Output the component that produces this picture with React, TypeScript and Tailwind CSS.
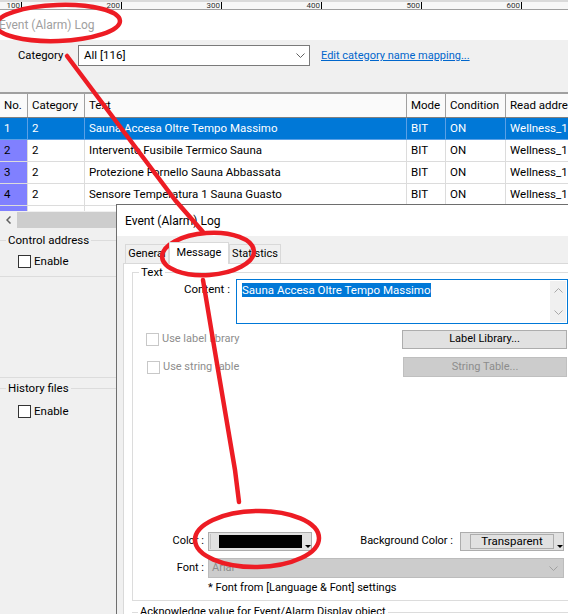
import React from "react"

const cols = "grid grid-cols-[28px_57px_322px_39px_60px_90px]"

const rows = [
    { no: "1", cat: "2", text: "Sauna Accesa Oltre Tempo Massimo", mode: "BIT", cond: "ON", addr: "Wellness_1" },
    { no: "2", cat: "2", text: "Intervento Fusibile Termico Sauna", mode: "BIT", cond: "ON", addr: "Wellness_1" },
    { no: "3", cat: "2", text: "Protezione Fornello Sauna Abbassata", mode: "BIT", cond: "ON", addr: "Wellness_1" },
    { no: "4", cat: "2", text: "Sensore Temperatura 1 Sauna Guasto", mode: "BIT", cond: "ON", addr: "Wellness_1" },
    // only the top few px of row 5 show above the scrollbar
    { no: "", cat: "", text: "", mode: "", cond: "", addr: "" },
]

function Chevron({ color = "#606060" }: { color?: string }) {
    return (
        <svg width="9" height="5" viewBox="0 0 9 5" className="shrink-0">
            <path d="M0.5 0.5 L4.5 4.5 L8.5 0.5" fill="none" stroke={color} strokeWidth="1" />
        </svg>
    )
}

function Tri() {
    return (
        <svg width="6" height="3" viewBox="0 0 6 3" className="shrink-0">
            <path d="M0 0 H6 L3 3 Z" fill="#000" />
        </svg>
    )
}

function Check({ disabled }: { disabled?: boolean }) {
    return (
        <span className={`inline-block w-[13px] h-[13px] shrink-0 bg-white border ${disabled ? "border-[#c8c8c8]" : "border-[#333333]"}`} />
    )
}

function Ruler() {
    return (
        <div className="h-[10px] bg-[#f7f7f7] border-t-[2px] border-t-[#dadada] border-b border-b-[#a0a0a0] flex overflow-hidden">
            <div className="flex -ml-[78px]">
                {["100", "200", "300", "400", "500", "600"].map((n) => (
                    <div key={n} className="w-[100px] h-[7px] shrink-0 flex justify-end items-end border-r border-black">
                        <span className="text-[8px] leading-[7px] pr-[1px] text-[#333]">{n}</span>
                    </div>
                ))}
            </div>
        </div>
    )
}

function Table() {
    return (
        <div className="h-[119px] overflow-hidden border-t-[2px] border-[#a0a0a0] bg-white text-[11.5px]">
            <div className={`${cols} h-[24px] bg-[#fafafa] border-b border-[#808080]`}>
                {["No.", "Category", "Text", "Mode", "Condition", "Read address"].map((h) => (
                    <div key={h} className="border-r border-[#a0a0a0] px-[4px] flex items-center whitespace-nowrap overflow-hidden">{h}</div>
                ))}
            </div>
            {rows.map((r, i) => {
                const sel = i === 0
                const cell = `border-r border-b px-[4px] flex items-center whitespace-nowrap overflow-hidden ${sel ? "bg-[#0078d7] text-white border-[#5aa0e6]" : "border-[#dcdcdc]"}`
                return (
                    <div key={i} className={`${cols} h-[22px]`}>
                        <div className={`${cell} ${sel ? "" : "bg-[#8080ff]"}`}>{r.no}</div>
                        <div className={cell}>{r.cat}</div>
                        <div className={cell}>{r.text}</div>
                        <div className={cell}>{r.mode}</div>
                        <div className={cell}>{r.cond}</div>
                        <div className={cell}>{r.addr}</div>
                    </div>
                )
            })}
        </div>
    )
}

function Dialog() {
    return (
        <div className="absolute left-[116px] top-[204px] w-[470px] h-[420px] border-l border-t border-[#6e6e6e] bg-[#f0f0f0] flex flex-col text-[11px]">
            <div className="h-[31px] bg-white flex items-center pl-[8px] text-[12px]">Event (Alarm) Log</div>
            <div className="flex items-end h-[27px] pl-[8px]">
                <div className="w-[44px] h-[19px] border border-[#d9d9d9] border-b-0 bg-[#f0f0f0] flex items-center justify-center">General</div>
                <div className="w-[60px] h-[22px] border border-[#d9d9d9] border-b-0 bg-white flex items-center justify-center -mb-[1px] relative z-10">Message</div>
                <div className="w-[52px] h-[19px] border border-[#d9d9d9] border-b-0 bg-[#f0f0f0] flex items-center justify-center">Statistics</div>
            </div>
            <div className="ml-[6px] flex-1 border border-[#d9d9d9] bg-white pl-[8px] pt-[1px]">
                <fieldset className="w-[450px] border border-[#dcdcdc] pb-[5px]">
                    <legend className="ml-[6px] px-[2px] leading-[14px] text-[11.5px]">Text</legend>
                    <div className="flex">
                        <span className="w-[97px] text-right leading-[14px] mt-[3px] text-[11.5px]">Content :</span>
                        <div className="ml-[6px] w-[332px] h-[45px] border border-[#0078d7] bg-white flex">
                            <div className="flex-1 pl-[5px] pt-[3px]">
                                <span className="bg-[#0078d7] text-white leading-[14px] inline-block text-[11.5px]">Sauna Accesa Oltre Tempo Massimo</span>
                            </div>
                            <div className="w-[16px] mr-[1px] my-[1px] bg-[#f0f0f0] flex flex-col items-center justify-between py-[7px]">
                                <svg width="9" height="5" viewBox="0 0 9 5"><path d="M0.5 4.5 L4.5 0.5 L8.5 4.5" fill="none" stroke="#a8a8a8" /></svg>
                                <Chevron color="#a8a8a8" />
                            </div>
                        </div>
                    </div>
                    <div className="flex items-center mt-[6px] pl-[13px]">
                        <div className="w-[256px] flex items-center gap-[3px] text-[#8d8d8d]">
                            <Check disabled />
                            <span>Use label library</span>
                        </div>
                        <div className="w-[165px] h-[19px] border border-[#adadad] bg-[#e1e1e1] flex items-center justify-center">Label Library...</div>
                    </div>
                    <div className="flex items-center mt-[8px] pl-[14px]">
                        <div className="w-[256px] flex items-center gap-[3px] text-[#8d8d8d]">
                            <Check disabled />
                            <span>Use string table</span>
                        </div>
                        <div className="w-[164px] h-[20px] border border-[#bfbfbf] bg-[#cccccc] text-[#8d8d8d] flex items-center justify-center">String Table...</div>
                    </div>
                    <div className="flex items-center mt-[155px]">
                        <span className="w-[71px] text-right">Color :</span>
                        <div className="ml-[4px] w-[104px] h-[19px] border border-[#adadad] bg-[#e1e1e1] flex items-center">
                            <div className="ml-[1px] h-[15px] border-l border-[#c4c4c4]" />
                            <div className="ml-[8px] w-[84px] h-[13px] bg-black" />
                            <div className="ml-[3px] self-end mb-[2px]"><Tri /></div>
                        </div>
                        <span className="w-[141px] text-right">Background Color :</span>
                        <div className="ml-[7px] w-[104px] h-[19px] border border-[#adadad] bg-[#e1e1e1] flex items-center">
                            <div className="ml-[9px] w-[84px] h-[15px] border border-[#adadad] flex items-center justify-center text-[11.5px]">Transparent</div>
                            <div className="ml-[3px] self-end mb-[2px]"><Tri /></div>
                        </div>
                    </div>
                    <div className="flex items-center mt-[7px]">
                        <span className="w-[71px] text-right">Font :</span>
                        <div className="ml-[4px] w-[356px] h-[20px] border border-[#bcbcbc] bg-[#cccccc] text-[#8d8d8d] flex items-center justify-between pl-[3px] pr-[5px]">
                            <span>Arial</span>
                            <Chevron color="#a0a0a0" />
                        </div>
                    </div>
                    <div className="pl-[75px] mt-[3px] leading-[14px]">* Font from [Language &amp; Font] settings</div>
                </fieldset>
                <fieldset className="w-[450px] mt-[4px] border-t border-[#dcdcdc]">
                    <legend className="ml-[6px] px-[2px] leading-[14px]">Acknowledge value for Event/Alarm Display object</legend>
                </fieldset>
            </div>
        </div>
    )
}

function Annotations() {
    return (
        <svg className="absolute left-0 top-0 pointer-events-none" width="568" height="614" viewBox="0 0 568 614">
            <g fill="none" stroke="#ed1c24" strokeWidth="4.5" strokeLinecap="round" strokeLinejoin="round">
                <ellipse cx="58" cy="23" rx="62" ry="18" transform="rotate(-2 58 23)" />
                <polyline points="67,56 175,200 203,232" />
                <ellipse cx="208" cy="254" rx="46" ry="21" transform="rotate(-4 208 254)" />
                <polyline points="203,280 213,340 235,470 239,502" />
                <ellipse cx="257" cy="539" rx="62" ry="28" transform="rotate(-1 257 539)" />
            </g>
        </svg>
    )
}

export default function App() {
    return (
        <div className="relative w-[568px] h-[614px] overflow-hidden bg-[#f0f0f0] font-['Roboto',sans-serif] text-[11px] text-black">
            <Ruler />
            <div className="h-[30px] bg-white flex items-center -ml-[1px] text-[#a0a0a0] text-[12px]">Event (Alarm) Log</div>
            <div className="h-[52px] pt-[5px] flex items-start">
                <span className="ml-[18px] w-[60px] leading-[21px] text-[11.3px]">Category</span>
                <div className="w-[232px] h-[21px] bg-white border border-[#7a7a7a] flex items-center justify-between pl-[5px] pr-[4px] text-[11.5px]">
                    <span>All [116]</span>
                    <Chevron />
                </div>
                <span className="ml-[11px] leading-[21px] text-[#0066cc] underline">Edit category name mapping...</span>
            </div>
            <Table />
            <div className="h-[18px] flex bg-[#f0f0f0]">
                <div className="w-[17px] flex items-center justify-center">
                    <svg width="5" height="8" viewBox="0 0 5 8"><path d="M4.5 0.5 L1 4 L4.5 7.5" fill="none" stroke="#606060" strokeWidth="1.5" /></svg>
                </div>
                <div className="w-[200px] my-[1px] bg-[#cdcdcd]" />
            </div>
            <fieldset className="mt-[3px] w-[200px] border-t border-b border-[#dcdcdc] pb-[8px]">
                <legend className="ml-[6px] px-[2px] leading-[16px] text-[11.5px]">Control address</legend>
                <label className="mt-[7px] ml-[18px] h-[13px] flex items-center gap-[3px]">
                    <Check />
                    <span className="text-[11.5px]">Enable</span>
                </label>
            </fieldset>
            <div className="mt-[100px] w-[200px] border-t border-[#dcdcdc]" />
            <fieldset className="mt-[2px] w-[200px] border-t border-[#dcdcdc]">
                <legend className="ml-[6px] px-[2px] leading-[16px] text-[11.5px]">History files</legend>
                <label className="mt-[9px] ml-[18px] h-[13px] flex items-center gap-[3px]">
                    <Check />
                    <span className="text-[11.5px]">Enable</span>
                </label>
            </fieldset>
            <Dialog />
            <Annotations />
        </div>
    )
}
